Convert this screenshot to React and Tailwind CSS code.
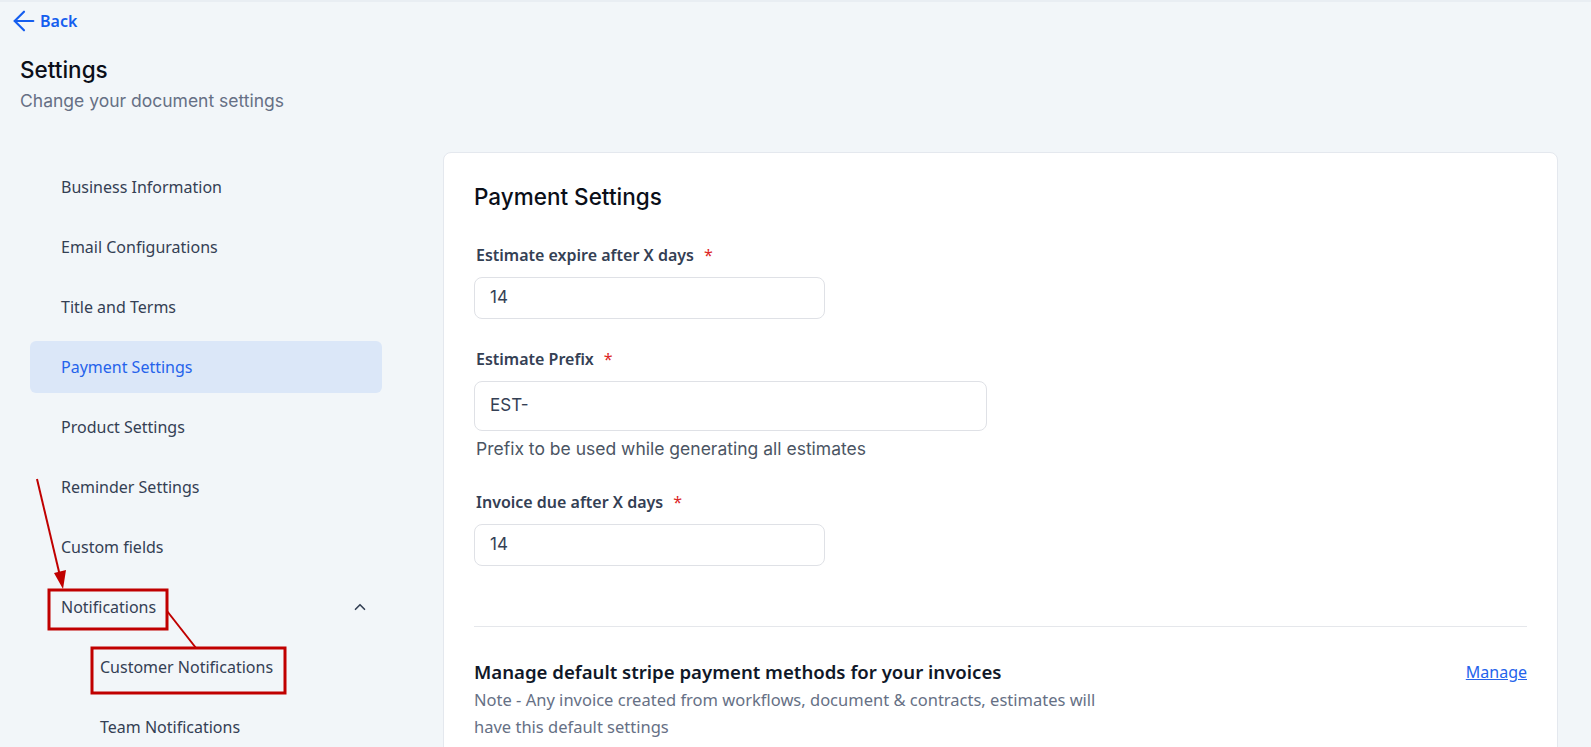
import React from "react";
import { ArrowLeft, ChevronUp } from "lucide-react";

const inter = { fontFamily: "Inter, 'Noto Sans', sans-serif" };
const segoe = { fontFamily: "'Noto Sans', 'Open Sans', sans-serif" };

const menu = [
  "Business Information",
  "Email Configurations",
  "Title and Terms",
  "Payment Settings",
  "Product Settings",
  "Reminder Settings",
  "Custom fields",
];

const Field = ({ label, value, width, tall, help }) => (
  <div>
    <div className="flex items-center h-5 pl-[2px] text-base font-semibold text-[#344054]" style={segoe}>
      {label}
      <span className="ml-[10px] text-[#dc2626] font-normal">*</span>
    </div>
    <div
      className={`mt-3 flex items-center rounded-lg border border-[#dfe1e6] bg-white pl-[15px] text-[17px] text-[#344054] ${tall ? "h-[50px]" : "h-[42px]"}`}
      style={{ ...inter, width }}
    >
      {value}
    </div>
    {help && (
      <p className="mt-[6px] pl-[2px] text-[17.5px] leading-6 text-[#4b5563]" style={inter}>
        {help}
      </p>
    )}
  </div>
);

export default function App() {
  return (
    <div className="relative min-h-screen bg-[#f2f6f9] border-t-2 border-[#e9eef3]">
      {/* header */}
      <div className="pl-2 pt-[3px]">
        <button className="flex items-center text-[#155eef] font-semibold text-base" style={segoe}>
          <ArrowLeft size={32} strokeWidth={1.6} />
          Back
        </button>
      </div>
      <div className="px-5 mt-[17px]" style={inter}>
        <h1 className="text-[22.5px] leading-8 font-medium text-[#0b0f19]">Settings</h1>
        <p className="text-[17.5px] leading-6 text-[#667085] mt-[3px]">Change your document settings</p>
      </div>

      <div className="flex mt-[39px]">
        {/* sidebar */}
        <nav className="w-[352px] ml-[30px] mt-[9px] flex flex-col gap-2 shrink-0" style={segoe}>
          {menu.map((item) => (
            <div
              key={item}
              className={`h-[52px] flex items-center px-[31px] rounded-md text-base ${
                item === "Payment Settings" ? "bg-[#dbe7f8] text-[#2563eb]" : "text-[#344054]"
              }`}
            >
              {item}
            </div>
          ))}
          <div className="h-[52px] flex items-center justify-between pl-[31px] pr-[13px] text-base text-[#344054]">
            Notifications
            <ChevronUp size={18} strokeWidth={2.2} className="text-[#344054]" />
          </div>
          <div className="h-[52px] flex items-center pl-[70px] text-base text-[#344054]">Customer Notifications</div>
          <div className="h-[52px] flex items-center pl-[70px] text-base text-[#344054]">Team Notifications</div>
        </nav>

        {/* card */}
        <main className="ml-[61px] mr-[33px] flex-1 rounded-lg border border-[#e4e8ee] bg-white px-[30px] pt-7 pb-10">
          <h2 className="text-[22.5px] leading-8 font-medium text-[#0b0f19]" style={inter}>Payment Settings</h2>
          <div className="mt-[32px]">
            <Field label="Estimate expire after X days" value="14" width={351} />
          </div>
          <div className="mt-[30px]">
            <Field label="Estimate Prefix" value="EST-" width={513} tall help="Prefix to be used while generating all estimates" />
          </div>
          <div className="mt-[31px]">
            <Field label="Invoice due after X days" value="14" width={351} />
          </div>
          <div className="mt-[60px] border-t border-[#e5e7eb]" />
          <div className="mt-[31px] flex justify-between" style={segoe}>
            <div>
              <h3 className="text-[18.6px] leading-7 font-semibold text-[#101828]">Manage default stripe payment methods for your invoices</h3>
              <p className="max-w-[640px] text-[16.5px] leading-[27px] text-[#667085]">
                Note - Any invoice created from workflows, document &amp; contracts, estimates will have this default settings
              </p>
            </div>
            <a className="text-base leading-7 text-[#2563eb] underline" href="#">Manage</a>
          </div>
        </main>
      </div>

      {/* annotations */}
      <svg className="absolute left-0 top-0 pointer-events-none" width="400" height="747">
        <line x1="37" y1="477" x2="60" y2="574" stroke="#c00000" strokeWidth="2" />
        <polygon points="63,587 54,571 66,568" fill="#c00000" />
        <rect x="49" y="588" width="118" height="39" fill="none" stroke="#c00000" strokeWidth="3" />
        <line x1="167" y1="609" x2="196" y2="646" stroke="#c00000" strokeWidth="2" />
        <rect x="92" y="646" width="193" height="45" fill="none" stroke="#c00000" strokeWidth="3" />
      </svg>
    </div>
  );
}
